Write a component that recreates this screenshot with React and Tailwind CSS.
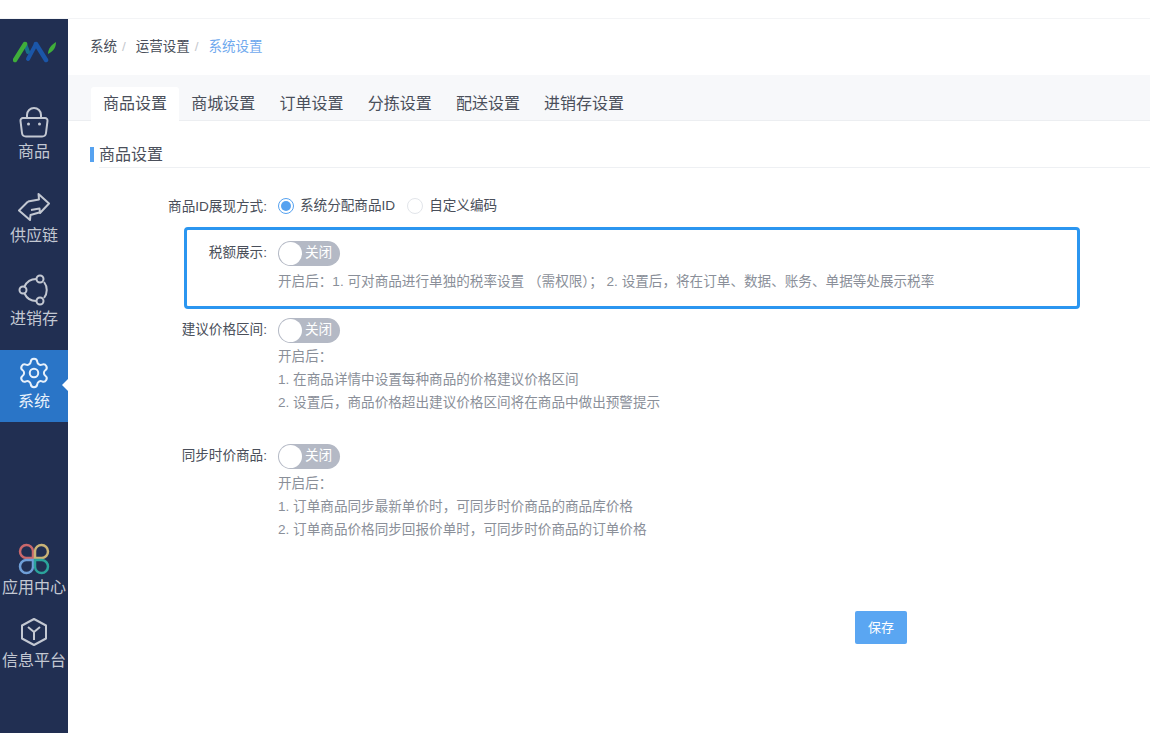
import { Settings } from "lucide-react";

const font = { fontFamily: '"Liberation Sans", "Noto Sans CJK SC", sans-serif' };

const Logo = () => (
    <svg width="44" height="22" viewBox="0 0 44 22" fill="none" strokeLinecap="round">
        <path d="M15 18 L23 3" stroke="#1b56a8" strokeWidth="4" />
        <path d="M12 3 L15 11" stroke="#17708c" strokeWidth="4" />
        <path d="M2 19 L12 3" stroke="#3fae3a" strokeWidth="4.5" />
        <path d="M23 3 L33 19" stroke="#1b56a8" strokeWidth="4.5" />
        <path d="M35 13 C35 8 38 4 43 1 C43 6 41 10 35 13 Z" fill="#3fae3a" />
    </svg>
);

const BagIcon = () => (
    <svg width="30" height="32" viewBox="0 0 30 32" fill="none" stroke="currentColor" strokeWidth="2">
        <path d="M8 11 V8 a7 7 0 0 1 14 0 V11" />
        <path d="M4 11 H26 a2.500 2.500 0 0 1 2.500 2.800 L27 26 a4 4 0 0 1 -4 3.500 H7 a4 4 0 0 1 -4 -3.500 L1.500 13.800 A2.500 2.500 0 0 1 4 11 Z" />
        <circle cx="9.500" cy="17" r="1.500" fill="currentColor" stroke="none" />
        <circle cx="20.500" cy="17" r="1.500" fill="currentColor" stroke="none" />
    </svg>
);

const SwapIcon = () => (
    <svg width="32" height="28" viewBox="0 0 32 28" fill="none" stroke="currentColor" strokeWidth="2" strokeLinejoin="round">
        <path d="M10 8.500 L21 6.500 L20.500 1 L31 10.500 L22 20 L21.500 15.500 L13 17" />
        <path d="M10 8.500 L1 17.500 L12 27 L12.500 22 L23 19" />
    </svg>
);

const CycleIcon = () => (
    <svg width="32" height="32" viewBox="0 0 32 32" fill="none" stroke="currentColor" strokeWidth="2">
        <path d="M18.500 5 A13 13 0 0 0 6.500 12.500" />
        <path d="M26 8 A13 13 0 0 1 26 24" />
        <path d="M6.500 19.500 A13 13 0 0 0 18.500 27" />
        <circle cx="22" cy="5" r="3.500" />
        <circle cx="5" cy="16" r="3.500" />
        <circle cx="22" cy="27" r="3.500" />
    </svg>
);

const AppIcon = () => (
    <svg width="32" height="32" viewBox="0 0 32 32" fill="none" strokeWidth="2.500">
        <path d="M15 15 H8 a6.500 6.500 0 1 1 7 -7 Z" stroke="#c9686b" />
        <path d="M17 15 H24 a6.500 6.500 0 1 0 -7 -7 Z" stroke="#c9b377" />
        <path d="M15 17 H8 a6.500 6.500 0 1 0 7 7 Z" stroke="#6f9fd8" />
        <path d="M17 17 H24 a6.500 6.500 0 1 1 -7 7 Z" stroke="#2ba39b" />
    </svg>
);

const BoxIcon = () => (
    <svg width="28" height="30" viewBox="0 0 28 30" fill="none" stroke="currentColor" strokeWidth="2" strokeLinejoin="round">
        <path d="M14 2 L26 8.500 V21.500 L14 28 L2 21.500 V8.500 Z" />
        <path d="M8 10 L14 15 L20 10 M14 15 V23" />
    </svg>
);

const navItems = [
    { label: "商品", icon: <BagIcon />, height: "h-[84px]" },
    { label: "供应链", icon: <SwapIcon />, height: "h-[83px]" },
    { label: "进销存", icon: <CycleIcon />, height: "h-[83px]" },
    { label: "系统", icon: <Settings size={34} strokeWidth={1.4} />, height: "h-[72px]", active: true },
];

const Sidebar = () => (
    <aside className="w-[68px] h-[714px] shrink-0 bg-[#212f52] text-[#c3c8d2] flex flex-col">
        <div className="h-[81px] pt-[22px] pl-[13px]">
            <Logo />
        </div>
        {navItems.map((item) => (
            <div
                key={item.label}
                className={`relative ${item.height} flex flex-col items-center pt-[7px] ${
                    item.active ? "bg-[#2a75c7] text-[#e8f1fb]" : ""
                }`}
            >
                <div className="h-[32px] flex items-center justify-center">{item.icon}</div>
                <span className="mt-[2px] text-[16px] leading-[22px] whitespace-nowrap">{item.label}</span>
                {item.active && (
                    <span className="absolute right-0 top-[29px] border-y-[6px] border-r-[6px] border-y-transparent border-r-white" />
                )}
            </div>
        ))}
        <div className="mt-[121px] flex flex-col items-center">
            <AppIcon />
            <span className="mt-[2px] text-[16px] leading-[22px] whitespace-nowrap">应用中心</span>
            <div className="mt-[17px] h-[32px] flex items-center">
                <BoxIcon />
            </div>
            <span className="mt-[2px] text-[16px] leading-[22px] whitespace-nowrap">信息平台</span>
        </div>
    </aside>
);

const tabs = ["商品设置", "商城设置", "订单设置", "分拣设置", "配送设置", "进销存设置"];

const Toggle = () => (
    <div className="w-[62px] h-[25px] rounded-full bg-[#b4b9c5] flex items-center p-[1px]">
        <span className="w-[23px] h-[23px] rounded-full bg-white" />
        <span className="ml-[3px] text-white">关闭</span>
    </div>
);

const Radio = ({ checked, label }) => (
    <label className="flex items-center gap-[6px]">
        {checked ? (
            <span className="w-[16px] h-[16px] rounded-full border border-[#56a2f0] flex items-center justify-center">
                <span className="w-[10px] h-[10px] rounded-full bg-[#56a2f0]" />
            </span>
        ) : (
            <span className="w-[16px] h-[16px] rounded-full border border-[#e2e5ea]" />
        )}
        <span>{label}</span>
    </label>
);

const Row = ({ label, width = "w-[199px]", children }) => (
    <div className="flex gap-[11px]">
        <div className={`${width} shrink-0 text-right leading-[23px] text-[#4a4f5a]`}>{label}:</div>
        <div className="flex-1">{children}</div>
    </div>
);

const Help = ({ lines, gap = "mt-[4px]" }) => (
    <div className={`${gap} text-[#8a8f99] leading-[23px]`}>
        {lines.map((line) => (
            <p key={line}>{line}</p>
        ))}
    </div>
);

export default function App() {
    return (
        <div className="w-[1150px] h-[750px] overflow-hidden bg-white text-[13.6px]" style={font}>
            <div className="h-[19px] border-b border-[#f3f4f6]" />
            <div className="flex">
                <Sidebar />
                <main className="flex-1 min-w-0">
                    <div className="h-[56px] pl-[22px] flex items-center text-[13.5px]">
                        <span className="text-[#4a4f5a]">系统</span>
                        <span className="ml-[5px] mr-[10px] text-[#c5c8ce]">/</span>
                        <span className="text-[#4a4f5a]">运营设置</span>
                        <span className="ml-[5px] mr-[10px] text-[#c5c8ce]">/</span>
                        <span className="text-[#6fa9ee]">系统设置</span>
                    </div>
                    <div className="h-[46px] bg-[#f7f8fa] border-b border-[#eceef1] pl-[23px] flex items-end text-[16px] text-[#4a4f5a]">
                        {tabs.map((tab, index) => (
                            <div
                                key={tab}
                                className={`px-[12.1px] flex items-center ${
                                    index === 0 ? "bg-white rounded-t-[3px] -mb-px h-[34px]" : "h-[33px]"
                                }`}
                            >
                                {tab}
                            </div>
                        ))}
                    </div>
                    <div className="ml-[22px] mt-[22px] flex items-start">
                        <span className="w-[4px] h-[15px] mt-[4px] bg-[#56a2f0]" />
                        <span className="ml-[5px] flex-1 h-[25px] border-b border-[#eef0f3] text-[16px] leading-[24px] text-[#4a4f5a]">
                            商品设置
                        </span>
                    </div>

                    <div className="mt-[27px]">
                        <Row label="商品ID展现方式">
                            <div className="h-[25px] flex items-center gap-[12px] text-[#4a4f5a] -mt-px">
                                <Radio checked label="系统分配商品ID" />
                                <Radio label="自定义编码" />
                            </div>
                        </Row>

                        <div className="ml-[116px] mt-[8px] w-[896px] h-[82px] border-[3px] border-[#2b96f0] rounded-[4px] pt-[11px]">
                            <Row label="税额展示" width="w-[80px]">
                                <Toggle />
                                <Help lines={["开启后：1. 可对商品进行单独的税率设置 （需权限）； 2. 设置后，将在订单、数据、账务、单据等处展示税率"]} />
                            </Row>
                        </div>

                        <div className="mt-[9px]">
                            <Row label="建议价格区间">
                                <Toggle />
                                <Help
                                    gap="mt-[2px]"
                                    lines={[
                                        "开启后：",
                                        "1. 在商品详情中设置每种商品的价格建议价格区间",
                                        "2. 设置后，商品价格超出建议价格区间将在商品中做出预警提示",
                                    ]}
                                />
                            </Row>
                        </div>

                        <div className="mt-[30px]">
                            <Row label="同步时价商品">
                                <Toggle />
                                <Help
                                    gap="mt-[3px]"
                                    lines={[
                                        "开启后：",
                                        "1. 订单商品同步最新单价时，可同步时价商品的商品库价格",
                                        "2. 订单商品价格同步回报价单时，可同步时价商品的订单价格",
                                    ]}
                                />
                            </Row>
                        </div>
                    </div>

                    <button
                        type="button"
                        className="block ml-[787px] mt-[70px] w-[52px] h-[33px] rounded-[2px] bg-[#5aa6f2] text-white text-[13px]"
                    >
                        保存
                    </button>
                </main>
            </div>
        </div>
    );
}
